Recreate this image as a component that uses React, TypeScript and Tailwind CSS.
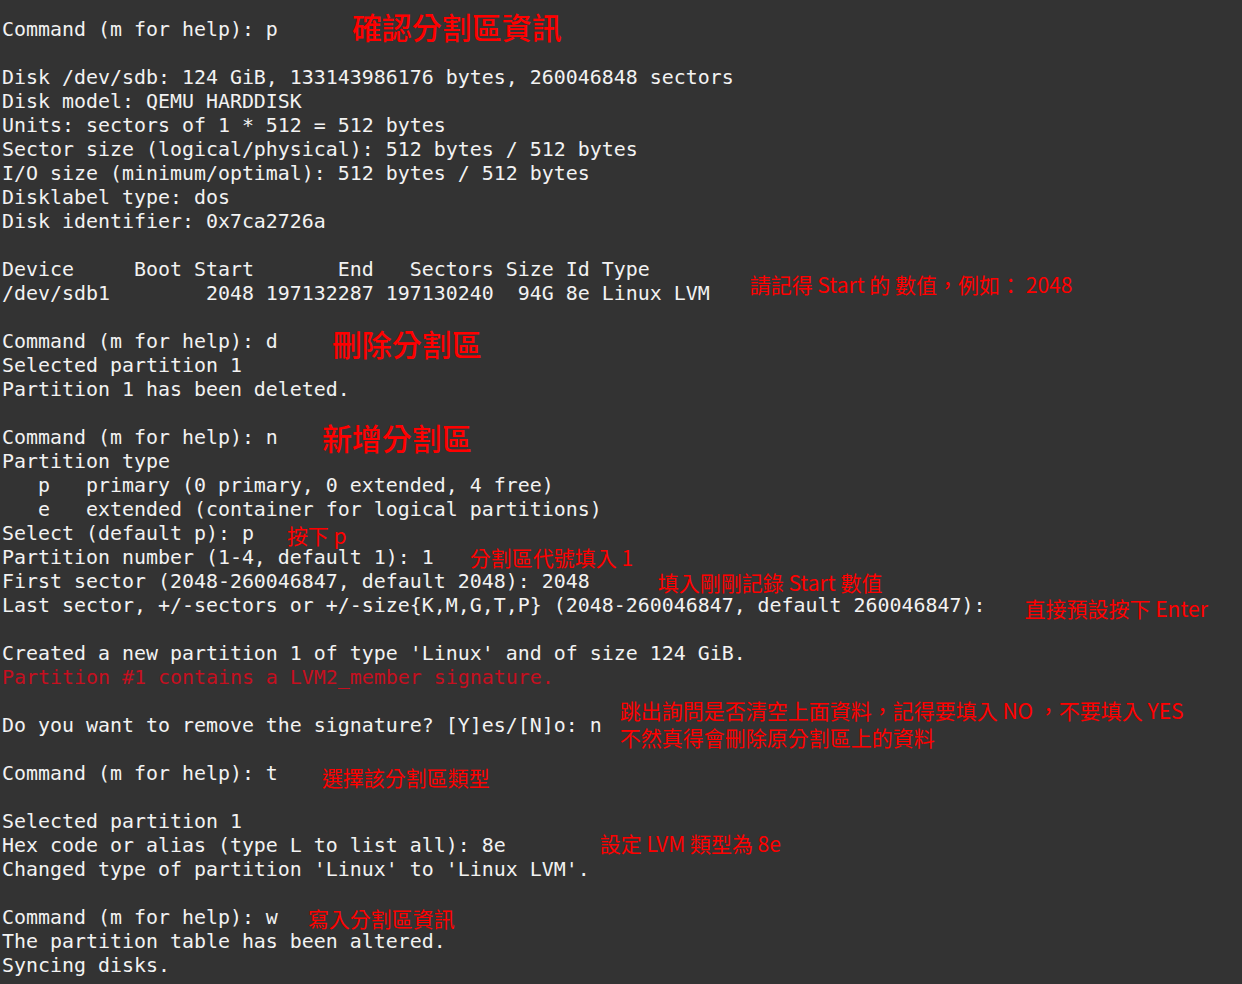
import React from "react";

const Line = ({ t, red, ann }: { t?: string; red?: boolean; ann?: React.ReactNode }) => (
  <div className="flex h-[24px] items-center whitespace-pre">
    <span className={red ? "text-[#c50f1f]" : "text-[#f2f2f2]"}>{t ?? ""}</span>
    {ann}
  </div>
);

const cjk = "text-[#ff0000] font-['Noto_Sans_CJK_TC','Noto_Sans_CJK_SC',sans-serif]";
const big = `leading-none text-[30px] font-medium ${cjk}`;
const small = `leading-none text-[21px] ${cjk}`;

export default function App() {
  return (
    <div
      lang="zh-TW"
      className="min-h-[984px] w-full bg-[#333333] pl-[2px] pt-[18px] font-['DejaVu_Sans_Mono',monospace] text-[19.93px]"
    >
      <Line t="Command (m for help): p" ann={<span className={`${big} ml-[74px] -translate-y-[4px]`}>確認分割區資訊</span>} />
      <Line />
      <Line t="Disk /dev/sdb: 124 GiB, 133143986176 bytes, 260046848 sectors" />
      <Line t="Disk model: QEMU HARDDISK" />
      <Line t="Units: sectors of 1 * 512 = 512 bytes" />
      <Line t="Sector size (logical/physical): 512 bytes / 512 bytes" />
      <Line t="I/O size (minimum/optimal): 512 bytes / 512 bytes" />
      <Line t="Disklabel type: dos" />
      <Line t="Disk identifier: 0x7ca2726a" />
      <Line />
      <Line t="Device     Boot Start       End   Sectors Size Id Type" />
      <Line
        t="/dev/sdb1        2048 197132287 197130240  94G 8e Linux LVM"
        ann={<span className={`${small} ml-[40px] -translate-y-[10px]`}>請記得 Start 的 數值，例如： 2048</span>}
      />
      <Line />
      <Line t="Command (m for help): d" ann={<span className={`${big} ml-[54px] translate-y-[1px]`}>刪除分割區</span>} />
      <Line t="Selected partition 1" />
      <Line t="Partition 1 has been deleted." />
      <Line />
      <Line t="Command (m for help): n" ann={<span className={`${big} ml-[44px] -translate-y-[1px]`}>新增分割區</span>} />
      <Line t="Partition type" />
      <Line t="   p   primary (0 primary, 0 extended, 4 free)" />
      <Line t="   e   extended (container for logical partitions)" />
      <Line t="Select (default p): p" ann={<span className={`${small} ml-[33px] translate-y-[1px]`}>按下 p</span>} />
      <Line t="Partition number (1-4, default 1): 1" ann={<span className={`${small} ml-[36px] -translate-y-[1px]`}>分割區代號填入 1</span>} />
      <Line
        t="First sector (2048-260046847, default 2048): 2048"
        ann={<span className={`${small} ml-[68px]`}>填入剛剛記錄 Start 數值</span>}
      />
      <Line
        t="Last sector, +/-sectors or +/-size{K,M,G,T,P} (2048-260046847, default 260046847): "
        ann={<span className={`${small} ml-[27px] translate-y-[2px]`}>直接預設按下 Enter</span>}
      />
      <Line />
      <Line t="Created a new partition 1 of type 'Linux' and of size 124 GiB." />
      <Line red t="Partition #1 contains a LVM2_member signature." />
      <Line />
      <Line
        t="Do you want to remove the signature? [Y]es/[N]o: n"
        ann={
          <span className={`text-[21px] leading-[27px] ${cjk} ml-[18px] flex -translate-y-[2px] flex-col`}>
            <span>跳出詢問是否清空上面資料，記得要填入 NO ，不要填入 YES</span>
            <span>不然真得會刪除原分割區上的資料</span>
          </span>
        }
      />
      <Line />
      <Line t="Command (m for help): t" ann={<span className={`${small} ml-[44px] translate-y-[3px]`}>選擇該分割區類型</span>} />
      <Line />
      <Line t="Selected partition 1" />
      <Line
        t="Hex code or alias (type L to list all): 8e"
        ann={<span className={`${small} ml-[94px] -translate-y-[3px]`}>設定 LVM 類型為 8e</span>}
      />
      <Line t="Changed type of partition 'Linux' to 'Linux LVM'." />
      <Line />
      <Line t="Command (m for help): w" ann={<span className={`${small} ml-[30px]`}>寫入分割區資訊</span>} />
      <Line t="The partition table has been altered." />
      <Line t="Syncing disks." />
    </div>
  );
}
